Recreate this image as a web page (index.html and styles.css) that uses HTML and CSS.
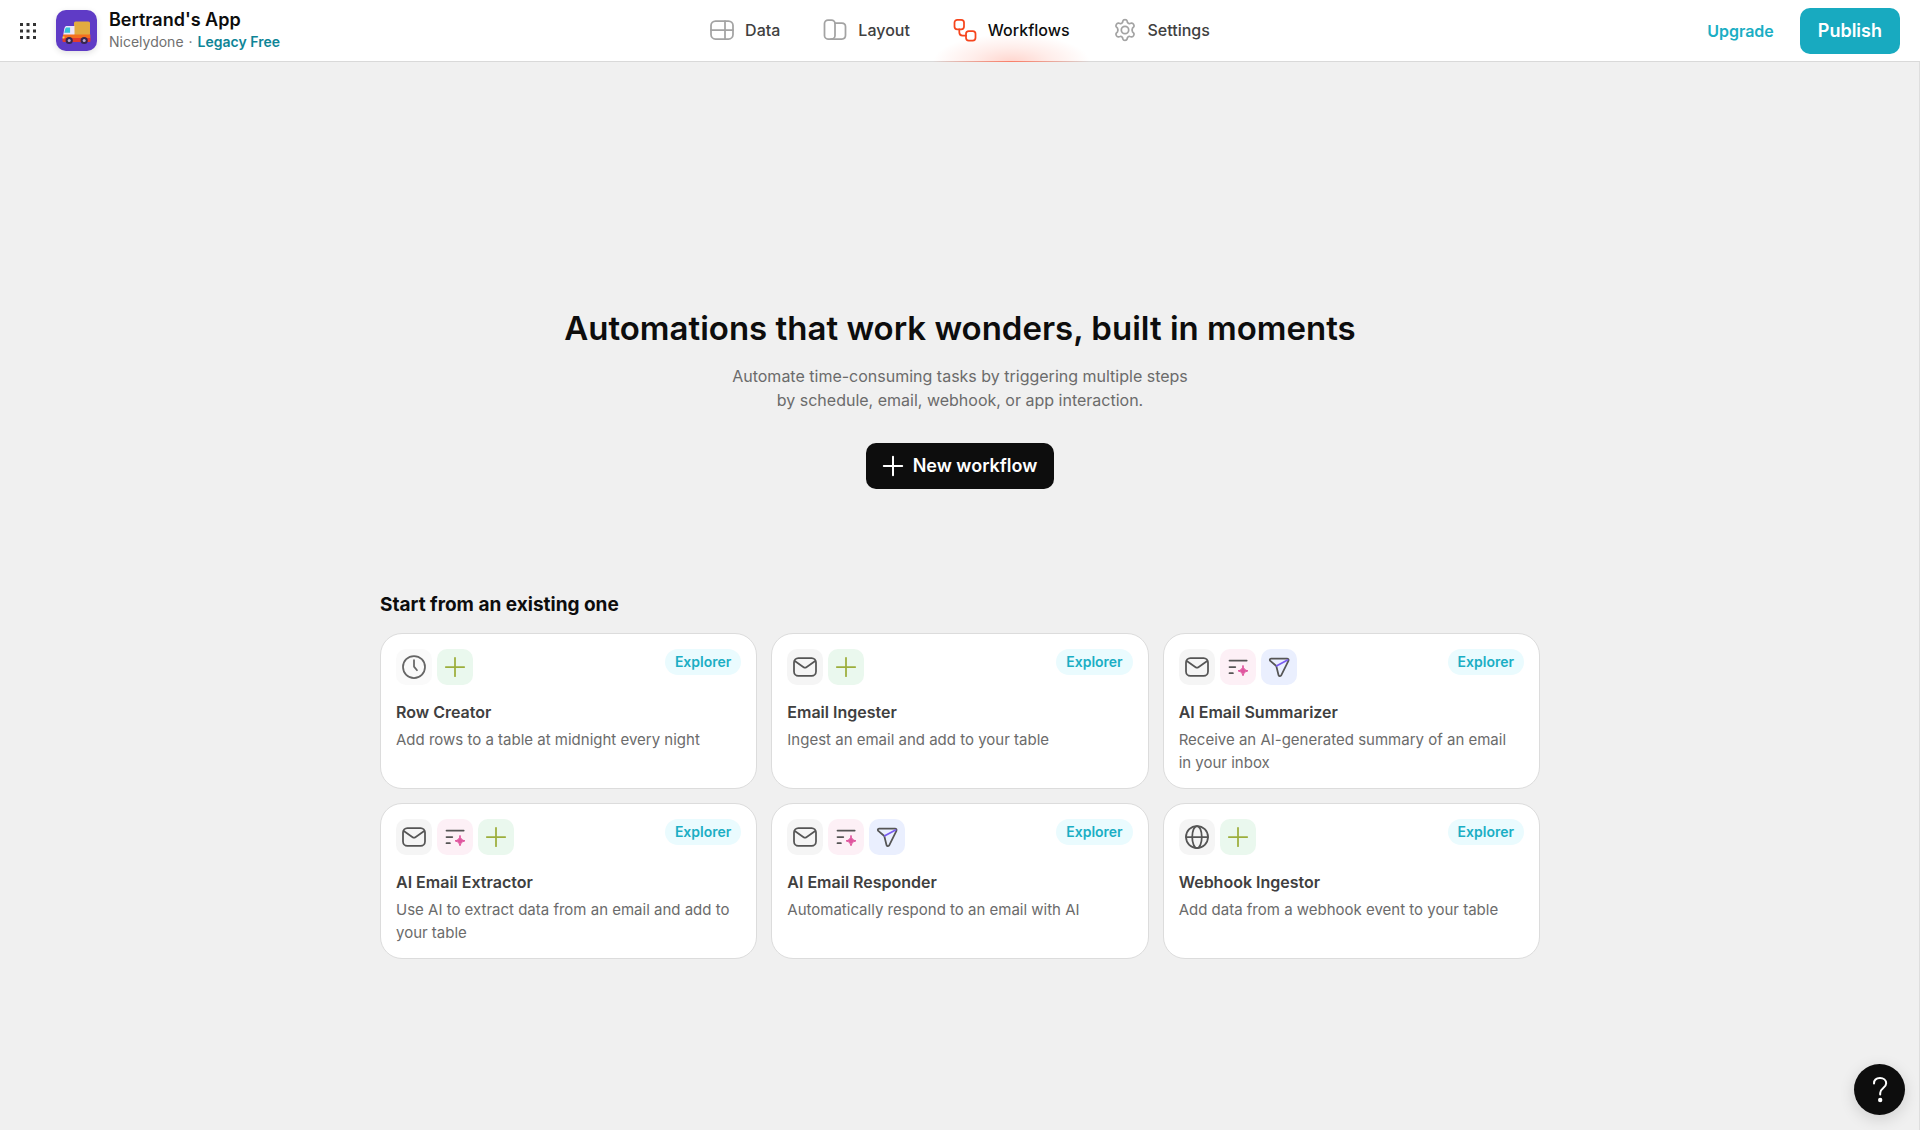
FILE: index.html
```html
<!DOCTYPE html>
<html lang="en">
<head>
<meta charset="utf-8">
<meta name="viewport" content="width=device-width, initial-scale=1">
<title>Workflows · Bertrand's App</title>
<link rel="stylesheet" href="styles.css">
</head>
<body>
<svg class="sprite" aria-hidden="true">
  <symbol id="i-plus" viewBox="0 0 24 24"><path d="M12 2.8v18.4M2.8 12h18.4"/></symbol>
  <symbol id="i-mail" viewBox="0 0 24 24"><rect x="1" y="3.2" width="22" height="17.6" rx="4.4"/><path d="M1.8 6l8.8 6.2a2.5 2.5 0 0 0 2.8 0L22.200 6"/></symbol>
  <symbol id="i-clock" viewBox="0 0 24 24"><circle cx="12" cy="12" r="11"/><path d="M12 5.200v6.400l3 3.600"/></symbol>
  <symbol id="i-globe" viewBox="0 0 24 24"><circle cx="12" cy="12" r="11"/><ellipse cx="12" cy="12" rx="4.800" ry="11"/><path d="M1 12h22"/></symbol>
  <symbol id="i-ai" viewBox="0 0 24 24"><path d="M3.500 5.600h17.200M3.500 12h5.800M3.500 18.200h3.400"/><path class="spark" d="M17 10.800q.5 4.500 5 5q-4.500.5-5 5q-.5-4.500-5-5q4.500-.5 5-5z"/></symbol>
  <symbol id="i-send" viewBox="0 0 24 24"><path d="M4.100 3.600h15.800q2.200.2 1.500 2.300l-7.200 14.400q-1.600 1.800-2.700-.3L9.300 11 3 5.600q-.7-1.700 1.100-2z"/><path class="ray" d="M9.800 10.800L20.600 5"/></symbol>
</svg>

<header class="topbar">
  <div class="brand">
    <button class="apps" type="button" aria-label="All apps">
      <svg viewBox="0 0 16 16" width="16" height="16"><path d="M0 0h3v3H0zM6.500 0h3v3h-3zM13 0h3v3h-3zM0 6.500h3v3H0zM6.500 6.500h3v3h-3zM13 6.500h3v3h-3zM0 13h3v3H0zM6.500 13h3v3h-3zM13 13h3v3h-3z"/></svg>
    </button>
    <a class="app-icon" href="#" aria-label="Bertrand's App">
      <svg viewBox="0 0 41 41" width="41" height="41">
        <rect x="18" y="11.500" width="16" height="14" rx="1.500" fill="#e2ab40"/>
        <path d="M10 16h8.500v9.500H7.200l1-6.500q.6-2.600 1.800-3z" fill="#ece6fb"/>
        <path d="M10.200 17.500h3.900v5.300H8.300l.8-3.500q.3-1.200 1.100-1.800z" fill="#35c3d9"/>
        <path d="M7 24.500h27.300v4H7z" fill="#f4701f"/>
        <path d="M6.500 28h28v3q0 1-1 1h-26q-1 0-1-1z" fill="#e23b2e"/>
        <path d="M6.500 26.500h2v2h-2z" fill="#ffd24d"/>
        <circle cx="13.200" cy="30.500" r="3.600" fill="#35264f"/><circle cx="13.200" cy="30.500" r="1.500" fill="#b9a9d6"/>
        <circle cx="28.200" cy="30.500" r="3.600" fill="#35264f"/><circle cx="28.200" cy="30.500" r="1.500" fill="#b9a9d6"/>
      </svg>
    </a>
    <div class="names">
      <span class="app-name">Bertrand's App</span>
      <span class="team"><span>Nicelydone</span><span>·</span><b>Legacy Free</b></span>
    </div>
  </div>

  <nav class="tabs" aria-label="Main">
    <a class="tab" href="#"><svg class="ico" viewBox="0 0 24 24"><rect x="1" y="3" width="22" height="18" rx="4.500"/><path d="M1 12h22M15 3v18"/></svg>Data</a>
    <a class="tab" href="#"><svg class="ico" viewBox="0 0 24 24"><rect x="1.500" y="2" width="10.500" height="19" rx="3.500"/><path d="M12 5h6.800q3.700 0 3.700 3.700v8.600q0 3.700-3.700 3.700H8"/></svg>Layout</a>
    <a class="tab active" href="#" aria-current="page"><svg class="ico" viewBox="0 0 24 24"><rect x="1.500" y="1.800" width="9.500" height="9.500" rx="2.800"/><rect x="13" y="13" width="9.500" height="9.500" rx="2.800"/><path d="M6.300 11.300v2.900q0 3.300 3.300 3.300H13"/></svg>Workflows</a>
    <a class="tab" href="#"><svg class="ico" viewBox="0 0 24 24"><circle cx="12" cy="12" r="3.700"/><path d="M9.900 2.900C10.300 1.300 13.700 1.300 14.100 2.900L14.500 4.400Q15.300 6 17 5.500L18.500 5.100C20.100 4.700 21.800 7.700 20.700 8.900L19.600 10Q18.500 12 19.600 14L20.700 15.100C21.800 16.300 20.100 19.300 18.500 18.900L17 18.500Q15.300 18 14.500 19.600L14.100 21.100C13.700 22.700 10.300 22.700 9.900 21.100L9.500 19.600Q8.700 18 7 18.500L5.500 18.900C3.900 19.300 2.200 16.300 3.300 15.100L4.400 14Q5.500 12 4.400 10L3.300 8.900C2.200 7.700 3.900 4.700 5.500 5.100L7 5.500Q8.700 6 9.500 4.400Z"/></svg>Settings</a>
  </nav>

  <div class="actions">
    <a class="upgrade" href="#">Upgrade</a>
    <button class="publish" type="button">Publish</button>
  </div>
</header>

<main class="page">
  <section class="hero">
    <h1>Automations that work wonders, built in moments</h1>
    <p>Automate time-consuming tasks by triggering multiple steps<br>by schedule, email, webhook, or app interaction.</p>
    <button class="new" type="button"><svg viewBox="0 0 24 24"><use href="#i-plus"/></svg>New workflow</button>
  </section>

  <section class="templates">
    <h2>Start from an existing one</h2>
    <div class="cards">
      <a class="card" href="#">
        <div class="top"><span class="tile faint"><svg class="ico"><use href="#i-clock"/></svg></span><span class="tile green"><svg class="ico"><use href="#i-plus"/></svg></span><span class="badge">Explorer</span></div>
        <h3>Row Creator</h3><p>Add rows to a table at midnight every night</p>
      </a>
      <a class="card" href="#">
        <div class="top"><span class="tile"><svg class="ico"><use href="#i-mail"/></svg></span><span class="tile green"><svg class="ico"><use href="#i-plus"/></svg></span><span class="badge">Explorer</span></div>
        <h3>Email Ingester</h3><p>Ingest an email and add to your table</p>
      </a>
      <a class="card" href="#">
        <div class="top"><span class="tile"><svg class="ico"><use href="#i-mail"/></svg></span><span class="tile pink"><svg class="ico"><use href="#i-ai"/></svg></span><span class="tile blue"><svg class="ico"><use href="#i-send"/></svg></span><span class="badge">Explorer</span></div>
        <h3>AI Email Summarizer</h3><p>Receive an AI-generated summary of an email in&nbsp;your inbox</p>
      </a>
      <a class="card" href="#">
        <div class="top"><span class="tile"><svg class="ico"><use href="#i-mail"/></svg></span><span class="tile pink"><svg class="ico"><use href="#i-ai"/></svg></span><span class="tile green"><svg class="ico"><use href="#i-plus"/></svg></span><span class="badge">Explorer</span></div>
        <h3>AI Email Extractor</h3><p>Use AI to extract data from an email and add to your table</p>
      </a>
      <a class="card" href="#">
        <div class="top"><span class="tile"><svg class="ico"><use href="#i-mail"/></svg></span><span class="tile pink"><svg class="ico"><use href="#i-ai"/></svg></span><span class="tile blue"><svg class="ico"><use href="#i-send"/></svg></span><span class="badge">Explorer</span></div>
        <h3>AI Email Responder</h3><p>Automatically respond to an email with AI</p>
      </a>
      <a class="card" href="#">
        <div class="top"><span class="tile"><svg class="ico"><use href="#i-globe"/></svg></span><span class="tile green"><svg class="ico"><use href="#i-plus"/></svg></span><span class="badge">Explorer</span></div>
        <h3>Webhook Ingestor</h3><p>Add data from a webhook event to your table</p>
      </a>
    </div>
  </section>
</main>

<button class="help" type="button" aria-label="Help">
  <svg viewBox="0 0 24 28" width="24" height="28"><path d="M6 7.500C6 4 8.500 2 12 2s6.200 2.200 6.200 5.300c0 4.700-6 4.700-6 9.700v1.500"/><circle cx="12.200" cy="24" r="2.200"/></svg>
</button>
</body>
</html>
```
FILE: styles.css
```css
* { box-sizing: border-box; }

body {
  margin: 0;
  min-height: 100vh;
  display: flex;
  flex-direction: column;
  background: #f0f0f0;
  color: #0d0d0d;
  font: 400 16px/24px Inter, "Liberation Sans", sans-serif;
}

h1, h2, h3, p { margin: 0; }
a { color: inherit; text-decoration: none; }
button { border: 0; font: inherit; cursor: pointer; }
svg { display: block; flex: none; }
.sprite { position: absolute; width: 0; height: 0; }

.ico {
  width: 24px;
  height: 24px;
  fill: none;
  stroke: currentColor;
  stroke-width: 1.75;
  stroke-linecap: round;
  stroke-linejoin: round;
}

/* Top bar */
.topbar {
  display: grid;
  grid-template-columns: 1fr auto 1fr;
  align-items: center;
  height: 62px;
  padding: 0 20px;
  background: #fff;
  border-bottom: 1px solid #d9d9d9;
}

.brand { display: flex; align-items: center; }
.apps { padding: 0; margin-right: 20px; background: none; fill: #333; }
.app-icon {
  margin-right: 12px;
  border-radius: 10px;
  background: #5f3bc6;
  box-shadow: 0 2px 6px rgba(0, 0, 0, .12);
}
.names { display: flex; flex-direction: column; }
.app-name { font-size: 18px; font-weight: 600; line-height: 22px; }
.team { display: flex; gap: 5px; font-size: 14px; line-height: 22px; color: #707070; }
.team b { font-weight: 600; color: #0e8597; }

.tabs { display: flex; align-self: stretch; gap: 43px; padding-bottom: 1px; }
.tab {
  display: flex;
  align-items: center;
  gap: 11px;
  font-weight: 500;
  color: #404040;
}
.tab .ico { color: #a3a3a3; }
.tab.active {
  position: relative;
  color: #0d0d0d;
}
.tab.active .ico { color: #f6451d; }
.tab.active::before {
  content: "";
  position: absolute;
  inset: 34px -20px -2px;
  background:
    linear-gradient(90deg, transparent, #f9806a 50%, transparent) bottom / 100% 1px no-repeat,
    radial-gradient(50% 100% at 50% 100%, rgba(255, 90, 60, .25), rgba(255, 90, 60, .11) 50%, transparent);
}

.actions { display: flex; justify-content: flex-end; align-items: center; gap: 26px; }
.upgrade { font-weight: 600; color: #1baec4; }
.publish {
  height: 46px;
  padding: 0 18px;
  border-radius: 10px;
  background: #18aac0;
  color: #fff;
  font-size: 18px;
  font-weight: 600;
}

/* Page */
.page {
  flex: 1;
  display: flex;
  flex-direction: column;
  align-items: center;
  padding: 244px 20px 40px;
  box-shadow: inset -1px 0 #dedede;
}

.hero { display: flex; flex-direction: column; align-items: center; text-align: center; }
.hero h1 { font-size: 33px; font-weight: 600; line-height: 44px; }
.hero p { margin-top: 14px; color: #6b6b6b; }
.new {
  display: flex;
  align-items: center;
  gap: 8px;
  height: 46px;
  margin-top: 31px;
  padding: 0 17px 0 15px;
  border-radius: 10px;
  background: #0d0d0d;
  color: #fff;
  font-size: 18px;
  font-weight: 600;
}
.new svg { width: 24px; height: 24px; stroke: currentColor; stroke-width: 2; stroke-linecap: round; }

.templates { width: 100%; max-width: 1160px; margin-top: 104px; }
.templates h2 { font-size: 19px; font-weight: 700; line-height: 24px; }
.cards {
  display: grid;
  grid-template-columns: repeat(auto-fit, minmax(340px, 1fr));
  gap: 14px;
  margin-top: 16px;
}
.card {
  min-height: 156px;
  padding: 15px 15px 14px;
  border: 1px solid #dcdcdc;
  border-radius: 22px;
  background: #fff;
}
.top { display: flex; align-items: flex-start; gap: 5px; }
.tile {
  display: grid;
  place-items: center;
  width: 36px;
  height: 36px;
  border-radius: 10px;
  background: #f5f5f5;
  color: #555;
}
.tile.faint { background: #fafafa; color: #666; }
.tile.green { background: #eaf8ee; color: #9cae3c; }
.tile.pink { background: #fdf0f6; }
.tile.blue { background: #eaeffe; }
.spark { fill: #e0569f; stroke: #e0569f; stroke-width: 1; }
.ray { stroke: #7a5cf0; }
.badge {
  margin-left: auto;
  padding: 0 10px;
  border-radius: 13px;
  background: #eafbfe;
  color: #1baec4;
  font-size: 14px;
  font-weight: 600;
  line-height: 26px;
}
.card h3 { margin-top: 15px; font-size: 16px; font-weight: 600; line-height: 24px; color: #404040; }
.card p { margin-top: 4px; font-size: 15px; line-height: 23px; color: #6b6b6b; }

.help {
  position: fixed;
  right: 15px;
  bottom: 15px;
  display: grid;
  place-items: center;
  width: 51px;
  height: 51px;
  padding: 0;
  border-radius: 50%;
  background: #0d0d0d;
  box-shadow: 0 4px 16px rgba(0, 0, 0, .14);
}
.help path { fill: none; stroke: #fff; stroke-width: 2; stroke-linecap: round; }
.help circle { fill: #fff; }
```
